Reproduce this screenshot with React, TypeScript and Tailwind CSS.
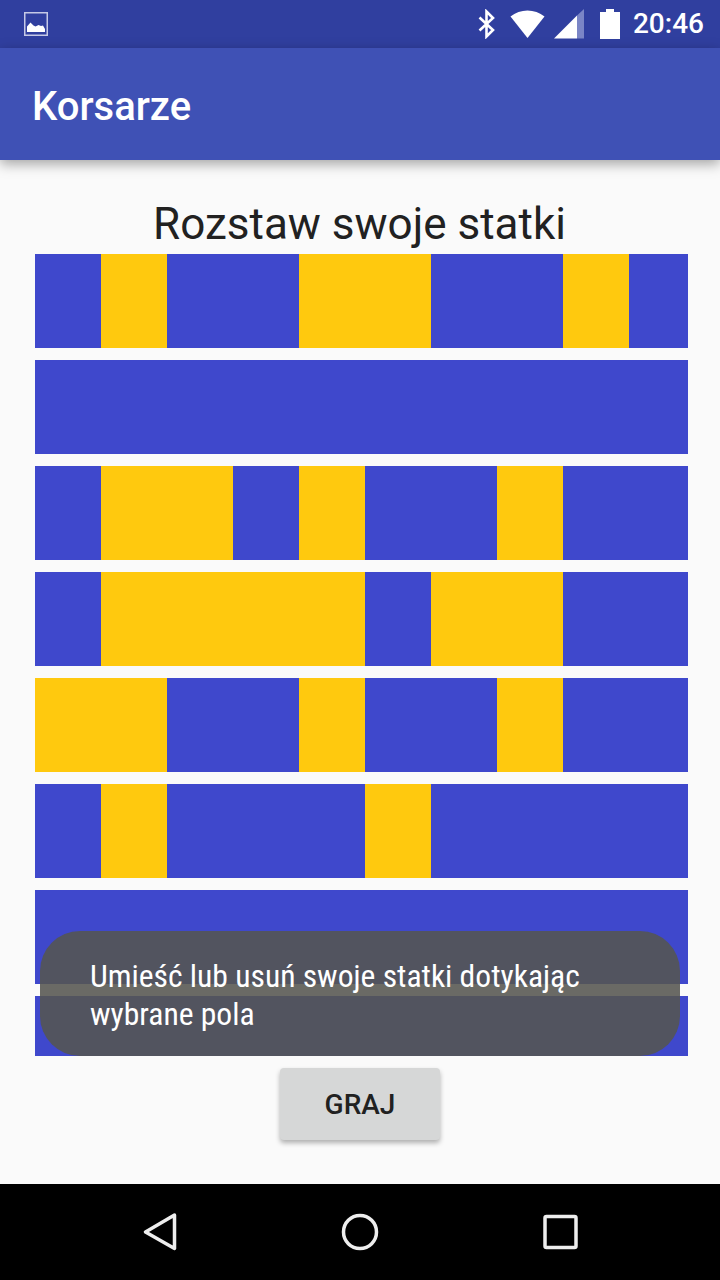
const rows: number[][] = [
  [1, 4, 5, 8],
  [],
  [1, 2, 4, 7],
  [1, 2, 3, 4, 6, 7],
  [0, 1, 4, 7],
  [1, 5],
  [],
  [],
];

// Consecutive cells merge into one block so that no seam shows between them.
function spans(on: number[]) {
  const out: { start: number; len: number }[] = [];
  on.forEach((c) => {
    const last = out[out.length - 1];
    if (last && last.start + last.len === c) last.len += 1;
    else out.push({ start: c, len: 1 });
  });
  return out;
}

function Row({ on }: { on: number[] }) {
  let cursor = 0;
  return (
    <div className="flex h-[94px] shrink-0 bg-[#3f48cc]">
      {spans(on).map((s) => {
        const gap = (s.start - cursor) * 66;
        cursor = s.start + s.len;
        return <div key={s.start} className="h-full bg-[#ffc90e]" style={{ width: s.len * 66, marginLeft: gap }} />;
      })}
    </div>
  );
}

export default function App() {
  return (
    <div className="relative flex h-[1280px] w-[720px] flex-col overflow-hidden bg-[#fafafa] font-['Roboto',sans-serif]">
      <div className="flex h-12 shrink-0 items-center justify-between bg-[#303f9f] pl-6 pr-4 text-white">
        <svg width="24" height="24" viewBox="0 0 24 24">
          <rect x="0.75" y="0.75" width="22.5" height="22.5" fill="none" stroke="#c5c9e6" strokeWidth="1.5" />
          <path d="M3 20V14.5L6.5 10.5L9.5 13.5L11.5 14.5L14.5 13L17 14L19 13.5L21 17V20Z" fill="#fff" />
        </svg>
        <div className="flex items-center">
          <svg width="20" height="30" viewBox="0 0 20 30">
            <path d="M2.5 8.5L16 21L9.5 27.5V2.5L16 9L2.5 21.5" fill="none" stroke="#fff" strokeWidth="2.6" />
          </svg>
          <svg width="36" height="30" viewBox="0 0 36 30" className="ml-[13px]">
            <path d="M0.5 7.5C10 -0.5 25 -0.5 34.5 7.5L17.5 29Z" fill="#fff" />
          </svg>
          <svg width="32" height="30" viewBox="0 0 32 30" className="ml-[7px]">
            <path d="M1 29.5L24 6.5V29.5Z" fill="#fff" />
            <path d="M24 6.5L31 0V29.5H24Z" fill="#7a85c6" />
          </svg>
          <svg width="20" height="30" viewBox="0 0 20 30" className="ml-[15px]">
            <path d="M6 0H14V3H20V30H0V3H6Z" fill="#fff" />
          </svg>
          <span className="ml-[13px] text-[28px] leading-none font-medium [font-stretch:90%]">20:46</span>
        </div>
      </div>

      <div className="z-10 flex h-28 shrink-0 items-center bg-[#3f51b5] pt-[6px] pl-8 shadow-[0_4px_12px_rgba(0,0,0,0.35)]">
        <span className="text-[40px] leading-none font-medium text-white">Korsarze</span>
      </div>

      <div className="flex flex-1 flex-col items-center bg-[#fafafa]">
        <h1 className="mt-[38px] -ml-[1px] h-[56px] text-[44px] leading-[52px] font-normal text-[#212121]">Rozstaw swoje statki</h1>
        <div className="ml-[35px] flex h-[802px] w-[653px] flex-col gap-3 self-start overflow-hidden">
          {rows.map((r, i) => (
            <Row key={i} on={r} />
          ))}
        </div>
        <button className="mt-3 h-[72px] w-40 rounded-[4px] bg-[#d6d7d7] pt-[1px] text-[28px] font-medium text-[#212121] shadow-[0_3px_5px_rgba(0,0,0,0.3)]">
          GRAJ
        </button>
      </div>

      <div className="flex h-24 shrink-0 items-center justify-center bg-black">
        <svg width="480" height="96" viewBox="120 1184 480 96">
          <path d="M174.5 1215L145.5 1232L174.5 1248.5Z" fill="none" stroke="#eee" strokeWidth="3.5" strokeLinejoin="round" />
          <circle cx="360" cy="1232" r="16.5" fill="none" stroke="#eee" strokeWidth="3.5" />
          <rect x="545" y="1216.5" width="31" height="31" rx="1.5" fill="none" stroke="#eee" strokeWidth="3.5" />
        </svg>
      </div>

      <div className="absolute top-[931px] left-10 h-[125px] w-[640px] rounded-[40px] bg-[#555550]/[0.88] pt-[27px] pl-[50px] text-[31.6px] leading-[38px] text-white [font-stretch:75%]">
        Umieść lub usuń swoje statki dotykając
        <br />
        wybrane pola
      </div>
    </div>
  );
}
